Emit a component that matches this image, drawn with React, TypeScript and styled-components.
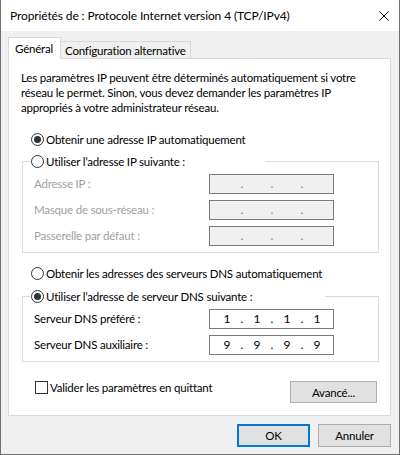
import React from 'react';
import styled, { createGlobalStyle } from 'styled-components';

const Global = createGlobalStyle`
  html, body { margin: 0; padding: 0; background: #ffffff; }
  body {
    font-family: Lato, "Liberation Sans", Arial, sans-serif;
    font-size: 11.5px;
    letter-spacing: -0.2px;
    color: #000000;
  }
  * { box-sizing: border-box; }
`;

const Window = styled.div`
  width: 400px;
  height: 455px;
  background: #f0f0f0;
  border: 1px solid #707070;
  border-top: none;
  display: flex;
  flex-direction: column;
`;

const TitleBar = styled.div`
  height: 31px;
  flex: none;
  background: #ffffff;
  display: flex;
  align-items: center;
  justify-content: space-between;
  padding: 0 10px 0 9px;
`;

const Title = styled.span`
  font-size: 12px;
  letter-spacing: -0.12px;
  line-height: 16px;
  white-space: nowrap;
`;

const CloseButton = styled.span`
  width: 10px;
  height: 10px;
  display: flex;
  margin-top: 1px;
`;

const Body = styled.div`
  flex: 1;
  display: flex;
  flex-direction: column;
  padding: 6px 8px 0 7px;
`;

const TabRow = styled.div`
  display: flex;
  align-items: flex-end;
  height: 21px;
  position: relative;
  z-index: 1;
`;

const Tab = styled.div<{ $active?: boolean }>`
  display: flex;
  align-items: center;
  white-space: nowrap;
  background: ${p => (p.$active ? '#ffffff' : '#f0f0f0')};
  border: 1px solid #d9d9d9;
  border-bottom: none;
  ${p => (p.$active
    ? 'height: 22px; margin-bottom: -1px; padding: 0 7px 1px 6px;'
    : 'height: 17px; border-left: none; padding: 0 4px 0 4px;')}
`;

const Panel = styled.div`
  height: 358px;
  flex: none;
  background: #ffffff;
  border: 1px solid #d9d9d9;
  padding: 11px 11px 0 12px;
  display: flex;
  flex-direction: column;
`;

const Intro = styled.p`
  margin: 0;
  line-height: 15px;
  white-space: nowrap;
`;

const RadioRow = styled.label<{ $mt?: number }>`
  display: flex;
  align-items: center;
  height: 16px;
  gap: 2px;
  padding-left: 10px;
  margin-top: ${p => p.$mt ?? 0}px;
  white-space: nowrap;
`;

const LegendRadio = styled.label`
  display: flex;
  align-items: center;
  height: 16px;
  gap: 2px;
  white-space: nowrap;
`;

const RadioCircle = styled.span<{ $checked?: boolean }>`
  width: 13px;
  height: 13px;
  flex: none;
  border-radius: 50%;
  border: 1px solid #333333;
  background: #ffffff;
  display: inline-flex;
  align-items: center;
  justify-content: center;
  &::after {
    content: '';
    width: 7px;
    height: 7px;
    border-radius: 50%;
    background: #333333;
    display: ${p => (p.$checked ? 'block' : 'none')};
  }
`;

const Group = styled.fieldset<{ $mt: number }>`
  margin: ${p => p.$mt}px 0 0 1px;
  padding: 5px 0 6px 8px;
  border: 1px solid #dcdcdc;
  min-width: 0;
`;

const Legend = styled.legend<{ $w: number }>`
  padding: 0;
  width: ${p => p.$w}px;
  height: 16px;
`;

const FieldGrid = styled.div`
  display: grid;
  grid-template-columns: 175px 125px;
  row-gap: 6px;
  align-items: center;
  padding-left: 3px;
`;

const FieldLabel = styled.span<{ $disabled?: boolean }>`
  color: ${p => (p.$disabled ? '#a0a0a0' : '#000000')};
  white-space: nowrap;
  line-height: 16px;
`;

const IpBox = styled.div<{ $disabled?: boolean }>`
  width: 125px;
  height: 20px;
  border: 1px solid #7a7a7a;
  background: ${p => (p.$disabled ? '#f0f0f0' : '#ffffff')};
  color: ${p => (p.$disabled ? '#808080' : '#000000')};
  display: flex;
  align-items: center;
  padding-left: 5px;
  line-height: 18px;
  font-size: 12px;
  letter-spacing: 0;
`;

const Octet = styled.span`
  width: 24px;
  text-align: center;
`;

const Dot = styled.span`
  width: 6px;
  text-align: center;
`;

const BottomRow = styled.div`
  display: flex;
  justify-content: space-between;
  align-items: flex-start;
  margin-top: 19px;
`;

const CheckLabel = styled.label`
  display: flex;
  align-items: center;
  gap: 2px;
  height: 13px;
  margin-left: 14px;
  white-space: nowrap;
`;

const CheckBox = styled.span`
  width: 13px;
  height: 13px;
  flex: none;
  border: 1px solid #333333;
  background: #ffffff;
`;

const Button = styled.button<{ $primary?: boolean; $w: number; $h: number }>`
  width: ${p => p.$w}px;
  height: ${p => p.$h}px;
  background: #e1e1e1;
  border: ${p => (p.$primary ? '2px solid #0078d7' : '1px solid #adadad')};
  font-family: inherit;
  font-size: 11.5px;
  letter-spacing: -0.2px;
  color: #000000;
  padding: 0;
  margin: 0;
  display: flex;
  align-items: center;
  justify-content: center;
`;

const AdvancedButton = styled(Button)`
  margin-right: 2px;
`;

const Footer = styled.div`
  display: flex;
  justify-content: flex-end;
  gap: 8px;
  padding-top: 8px;
`;

const IpField: React.FC<{ values?: string[]; disabled?: boolean }> = ({ values = ['', '', '', ''], disabled }) => (
  <IpBox $disabled={disabled}>
    <Octet>{values[0]}</Octet>
    <Dot>.</Dot>
    <Octet>{values[1]}</Octet>
    <Dot>.</Dot>
    <Octet>{values[2]}</Octet>
    <Dot>.</Dot>
    <Octet>{values[3]}</Octet>
  </IpBox>
);

export default function App() {
  return (
    <>
      <Global />
      <Window>
        <TitleBar>
          <Title>Propriétés de : Protocole Internet version 4 (TCP/IPv4)</Title>
          <CloseButton>
            <svg width="10" height="10" viewBox="0 0 10 10">
              <path d="M0.5 0.5 L9.5 9.5 M9.5 0.5 L0.5 9.5" stroke="#000" strokeWidth="1" fill="none" />
            </svg>
          </CloseButton>
        </TitleBar>
        <Body>
          <TabRow>
            <Tab $active>Général</Tab>
            <Tab>Configuration alternative</Tab>
          </TabRow>
          <Panel>
            <Intro>
              Les paramètres IP peuvent être déterminés automatiquement si votre
              <br />
              réseau le permet. Sinon, vous devez demander les paramètres IP
              <br />
              appropriés à votre administrateur réseau.
            </Intro>

            <RadioRow $mt={16}>
              <RadioCircle $checked />
              Obtenir une adresse IP automatiquement
            </RadioRow>

            <Group $mt={6}>
              <Legend $w={234}>
                <LegendRadio>
                  <RadioCircle />
                  Utiliser l’adresse IP suivante :
                </LegendRadio>
              </Legend>
              <FieldGrid>
                <FieldLabel $disabled>Adresse IP :</FieldLabel>
                <IpField disabled />
                <FieldLabel $disabled>Masque de sous-réseau :</FieldLabel>
                <IpField disabled />
                <FieldLabel $disabled>Passerelle par défaut :</FieldLabel>
                <IpField disabled />
              </FieldGrid>
            </Group>

            <RadioRow $mt={12}>
              <RadioCircle />
              Obtenir les adresses des serveurs DNS automatiquement
            </RadioRow>

            <Group $mt={7}>
              <Legend $w={294}>
                <LegendRadio>
                  <RadioCircle $checked />
                  Utiliser l’adresse de serveur DNS suivante :
                </LegendRadio>
              </Legend>
              <FieldGrid>
                <FieldLabel>Serveur DNS préféré :</FieldLabel>
                <IpField values={['1', '1', '1', '1']} />
                <FieldLabel>Serveur DNS auxiliaire :</FieldLabel>
                <IpField values={['9', '9', '9', '9']} />
              </FieldGrid>
            </Group>

            <BottomRow>
              <CheckLabel>
                <CheckBox />
                Valider les paramètres en quittant
              </CheckLabel>
              <AdvancedButton $w={87} $h={22}>Avancé...</AdvancedButton>
            </BottomRow>
          </Panel>
          <Footer>
            <Button $primary $w={73} $h={23}>OK</Button>
            <Button $w={73} $h={23}>Annuler</Button>
          </Footer>
        </Body>
      </Window>
    </>
  );
}
